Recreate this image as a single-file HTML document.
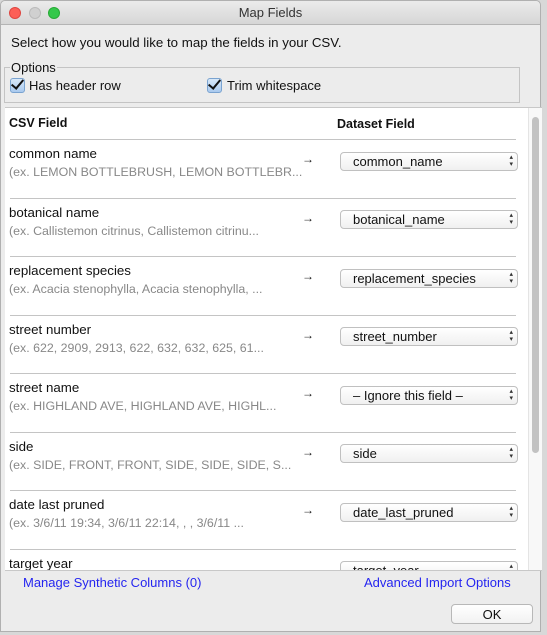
<!DOCTYPE html>
<html><head><style>
body{margin:0;width:547px;height:635px;background:#d8d8d8;position:relative;overflow:hidden;font-family:"Liberation Sans",sans-serif;font-size:13px;color:#111}
.win{position:absolute;left:0;top:0;width:541px;height:632px;background:#ececec;border:1px solid #b0b0b0;box-sizing:border-box;border-radius:5px 5px 0 0}
.title{position:absolute;left:0;top:0;width:100%;height:23px;background:linear-gradient(#ebebeb,#d6d6d6);border-bottom:1px solid #b4b4b4;text-align:center;line-height:23px;color:#333;border-radius:5px 5px 0 0}
.dot{position:absolute;top:6px;width:12px;height:12px;border-radius:50%}
.a{position:absolute;white-space:nowrap}
.cb{position:absolute;width:13px;height:13px;border:1px solid #7aa3d0;border-radius:3px;background:linear-gradient(#d8e8f8,#a9c9ee)}
.cb:after{content:"";position:absolute;left:3px;top:-2px;width:5px;height:10px;border:solid #111;border-width:0 2.5px 2.5px 0;transform:rotate(40deg)}
.tbl{position:absolute;left:4px;top:106px;width:537px;height:462px;background:#fff;border-top:1px solid #c8c8c8;border-bottom:1px solid #c8c8c8;overflow:hidden}
.line{position:absolute;left:5px;width:506px;height:1px;background:#c4c4c4}
.sel{position:absolute;left:335px;width:178px;height:19px;border:1px solid #c0c0c0;border-radius:4px;background:linear-gradient(#fff,#f0f0f0);box-sizing:border-box;padding-left:12px;line-height:18px;font-size:13px}
.sel:after{content:"\25B4\A\25BE";white-space:pre;position:absolute;right:4px;top:1px;font-size:7px;line-height:7px;color:#333}
.nm{position:absolute;left:4px;font-size:13.3px}
.ex{position:absolute;left:4px;color:#888;font-size:12.4px}
.arr{position:absolute;left:297px;font-size:12px;font-weight:bold}
.link{color:#2525f0}
</style></head><body>
<div class="win">
<div class="title">Map Fields</div>
<div class="dot" style="left:8px;background:#fc5f57;border:1px solid #de4641;box-sizing:border-box"></div>
<div class="dot" style="left:28px;background:#d0d0d0;border:1px solid #bbb;box-sizing:border-box"></div>
<div class="dot" style="left:47px;background:#34c84a;border:1px solid #27aa35;box-sizing:border-box"></div>
<div class="a" style="left:10px;top:34px;font-size:13.3px">Select how you would like to map the fields in your CSV.</div>
<div style="position:absolute;left:3px;top:66px;width:514px;height:34px;border:1px solid #c4c4c4"></div>
<div class="a" style="left:9px;top:59px;background:#ececec;padding:0 1px">Options</div>
<div class="cb" style="left:9px;top:77px"></div>
<div class="a" style="left:28px;top:77px">Has header row</div>
<div class="cb" style="left:206px;top:77px"></div>
<div class="a" style="left:226px;top:77px">Trim whitespace</div>
<div class="tbl">
 <div class="a" style="left:4px;top:8px;font-weight:bold;font-size:12.5px">CSV Field</div>
 <div class="a" style="left:332px;top:9px;font-weight:bold;font-size:12.5px">Dataset Field</div>
 <div style="position:absolute;left:523px;top:0;width:14px;height:462px;background:#f8f8f8;border-left:1px solid #e4e4e4"></div>
 <div style="position:absolute;left:527px;top:9px;width:7px;height:336px;background:#c2c2c2;border-radius:4px"></div>
 <div class="line" style="top:31px"></div>
 <div class="line" style="top:90px"></div>
 <div class="line" style="top:148px"></div>
 <div class="line" style="top:207px"></div>
 <div class="line" style="top:265px"></div>
 <div class="line" style="top:324px"></div>
 <div class="line" style="top:382px"></div>
 <div class="line" style="top:441px"></div>

 <div class="nm" style="top:38px">common name</div><div class="ex" style="top:57px">(ex. LEMON BOTTLEBRUSH, LEMON BOTTLEBR...</div><div class="arr" style="top:44px">&#8594;</div><div class="sel" style="top:44px">common_name</div>
 <div class="nm" style="top:97px">botanical name</div><div class="ex" style="top:116px">(ex. Callistemon citrinus, Callistemon citrinu...</div><div class="arr" style="top:103px">&#8594;</div><div class="sel" style="top:102px">botanical_name</div>
 <div class="nm" style="top:155px">replacement species</div><div class="ex" style="top:174px">(ex. Acacia stenophylla, Acacia stenophylla, ...</div><div class="arr" style="top:161px">&#8594;</div><div class="sel" style="top:161px">replacement_species</div>
 <div class="nm" style="top:214px">street number</div><div class="ex" style="top:233px">(ex. 622, 2909, 2913, 622, 632, 632, 625, 61...</div><div class="arr" style="top:220px">&#8594;</div><div class="sel" style="top:219px">street_number</div>
 <div class="nm" style="top:272px">street name</div><div class="ex" style="top:291px">(ex. HIGHLAND AVE, HIGHLAND AVE, HIGHL...</div><div class="arr" style="top:278px">&#8594;</div><div class="sel" style="top:278px">&#8211; Ignore this field &#8211;</div>
 <div class="nm" style="top:331px">side</div><div class="ex" style="top:350px">(ex. SIDE, FRONT, FRONT, SIDE, SIDE, SIDE, S...</div><div class="arr" style="top:337px">&#8594;</div><div class="sel" style="top:336px">side</div>
 <div class="nm" style="top:389px">date last pruned</div><div class="ex" style="top:408px">(ex. 3/6/11 19:34, 3/6/11 22:14, , , 3/6/11 ...</div><div class="arr" style="top:395px">&#8594;</div><div class="sel" style="top:395px">date_last_pruned</div>
 <div class="nm" style="top:448px">target year</div><div class="sel" style="top:453px">target_year</div>
</div>
<div class="a link" style="left:22px;top:574px">Manage Synthetic Columns (0)</div>
<div class="a link" style="left:363px;top:574px">Advanced Import Options</div>
<div style="position:absolute;left:450px;top:603px;width:82px;height:20px;border:1px solid #b8b8b8;border-radius:4px;background:linear-gradient(#fff,#f2f2f2);text-align:center;line-height:20px;box-sizing:border-box">OK</div>
</div>
</body></html>
